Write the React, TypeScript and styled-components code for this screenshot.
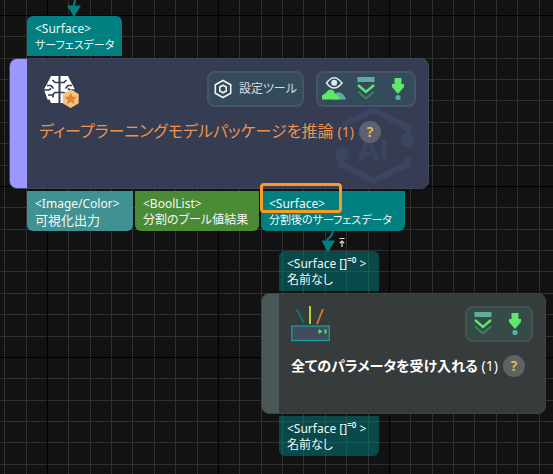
import React from "react";
import styled, { createGlobalStyle } from "styled-components";

const GlobalStyle = createGlobalStyle`
  *, *::before, *::after { box-sizing: border-box; }
  body {
    margin: 0;
    background: #121212;
    font-family: "Noto Sans", "Noto Sans CJK JP", sans-serif;
    font-feature-settings: "palt";
  }
`;

const Canvas = styled.main`
  position: relative;
  min-height: 100vh;
  overflow: hidden;
  background: #121212;
`;

const GridLayer = styled.svg`
  position: absolute;
  inset: 0;
  width: 100%;
  height: 100%;
`;

const WireLayer = styled.svg`
  position: absolute;
  left: 0;
  top: 0;
  overflow: visible;
`;

const NodeGroup = styled.section<{ $x: number; $y: number; $width: number }>`
  position: absolute;
  left: ${(p) => p.$x}px;
  top: ${(p) => p.$y}px;
  width: ${(p) => p.$width}px;
  display: flex;
  flex-direction: column;
  gap: 2px;
`;

const PortRow = styled.div`
  display: flex;
  gap: 2px;
  padding-left: 18px;
`;

const Port = styled.div<{ $color: string; $side: "in" | "out"; $width: number }>`
  min-width: ${(p) => p.$width}px;
  padding: 5px 8px 3px;
  border-radius: ${(p) => (p.$side === "in" ? "6px 6px 0 0" : "0 0 6px 6px")};
  background: ${(p) => p.$color};
  color: #f4f8f8;
  line-height: 16px;
  white-space: nowrap;
`;

const PortType = styled.div`
  height: 16px;
  font-size: 12px;
`;

const PortName = styled.div<{ $size: number }>`
  height: 16px;
  font-size: ${(p) => p.$size}px;
`;

const Sup = styled.sup`
  font-size: 8px;
  line-height: 8px;
  font-weight: 600;
`;

const NodeBox = styled.article<{ $fill: string; $stripe: string; $edge: string }>`
  position: relative;
  display: flex;
  overflow: hidden;
  border: 1px solid ${(p) => p.$edge};
  border-radius: 8px;
  background: ${(p) => p.$fill};
  &::before {
    content: "";
    flex: none;
    width: 17px;
    background: ${(p) => p.$stripe};
  }
`;

const NodeContent = styled.div<{ $bottom: number }>`
  position: relative;
  flex: 1;
  min-width: 0;
  padding: 12px 12px ${(p) => p.$bottom}px;
`;

const NodeHeader = styled.header`
  display: flex;
  align-items: flex-start;
  gap: 12px;
  height: 36px;
  & > svg { margin-right: auto; }
`;

const ToolButton = styled.button<{ $tint: string }>`
  display: flex;
  align-items: center;
  gap: 7px;
  height: 36px;
  padding: 0 5px;
  border: 2px solid #465565;
  border-radius: 8px;
  background: ${(p) => p.$tint};
  color: #d5dde2;
  font: inherit;
  font-size: 12px;
  line-height: 18px;
  white-space: nowrap;
`;

const ToolGroup = styled.div<{ $tint: string; $edge: string }>`
  display: flex;
  align-items: center;
  gap: 8px;
  height: 36px;
  padding: 0 4px;
  border: 2px solid ${(p) => p.$edge};
  border-radius: 8px;
  background: ${(p) => p.$tint};
`;

const IconButton = styled.button`
  display: flex;
  padding: 0;
  border: 0;
  background: none;
`;

const TitleRow = styled.div`
  position: relative;
  display: flex;
  align-items: center;
  gap: 5px;
  margin-top: 13px;
`;

const Title = styled.h2<{ $color: string; $size: number; $weight: number }>`
  margin: 0;
  color: ${(p) => p.$color};
  font-size: ${(p) => p.$size}px;
  line-height: 22px;
  font-weight: ${(p) => p.$weight};
  white-space: nowrap;
`;

const Count = styled.span`
  font-size: 14px;
  font-weight: 400;
`;

const HelpButton = styled.button<{ $fill: string }>`
  flex: none;
  width: 22px;
  height: 22px;
  padding: 0;
  border: 0;
  border-radius: 50%;
  background: ${(p) => p.$fill};
  color: #ecc04f;
  font: inherit;
  font-size: 14px;
  line-height: 22px;
  font-weight: 600;
`;

const Watermark = styled.svg`
  position: absolute;
  right: 13px;
  bottom: 3px;
`;

const Highlight = styled.div`
  position: absolute;
  left: 260px;
  top: 183px;
  width: 82px;
  height: 30px;
  border: 3px solid #ff9a1f;
  border-radius: 4px;
`;

const minor = [21, 43, 64, 85, 107, 128, 150];

function Grid() {
  return (
    <GridLayer aria-hidden="true">
      <defs>
        <pattern id="grid" x="47" y="15" width="171" height="171" patternUnits="userSpaceOnUse">
          {minor.map((n) => (
            <g key={n} fill="#303030">
              <rect x={n} y="0" width="1" height="171" />
              <rect x="0" y={n} width="171" height="1" />
            </g>
          ))}
          <rect width="1" height="171" fill="#000" />
          <rect width="171" height="1" fill="#000" />
        </pattern>
      </defs>
      <rect width="100%" height="100%" fill="url(#grid)" />
    </GridLayer>
  );
}

function Wires() {
  return (
    <WireLayer width="1" height="1" aria-hidden="true">
      <g fill="none" stroke="#008080" strokeWidth="2">
        <path d="M75 0 Q75 3 73 7" />
        <path d="M333 231 Q332 236 329 238 T328 243" />
      </g>
      <path d="M67 5.500h14L74 17z" fill="#008080" />
      <path d="M321.500 240.500h13.500L328 252.500z" fill="#008080" />
      <path d="M339.500 238.500h5M342 247v-6M339.800 243.200L342 241l2.200 2.200" fill="none" stroke="#e8e0cc" strokeWidth="1.200" />
    </WireLayer>
  );
}

function BrainIcon() {
  return (
    <svg width="42" height="38" viewBox="0 0 42 38" aria-hidden="true">
      <path d="M12 5h7.500v27H12l-1.500-3.500H8.500L5.500 20v-2.500L9 11z" fill="#fff" />
      <path d="M21.500 5H29l3 6 3.500 6.500V20l-3 8.500h-2L29 32h-7.500z" fill="#fff" />
      <g fill="none" stroke="#363d52" strokeWidth="1.700">
        <path d="M20 11.500h-4l-2.500-2.500M8 14.500h4l2.500 3M4 19h6l2-1.500M20 21.500h-4l-2 2v3M9 24h5" />
        <path d="M21 11.500h4l2.500-2.500M33 14.500h-4l-2.500 3M37 19h-6l-2-1.500M21 21.500h4l2 2v3" />
      </g>
      <path d="M31.700 18.500l8 4.600v9.200l-8 4.600-8-4.600v-9.200z" fill="#f8c380" />
      <path d="M31.700 21.800l1.800 3.800 4.100.5-3 2.900.8 4.100-3.700-2-3.700 2 .8-4.100-3-2.900 4.100-.5z" fill="#e5832e" />
    </svg>
  );
}

function LidarIcon() {
  return (
    <svg width="40" height="36" viewBox="0 0 40 36" aria-hidden="true">
      <path d="M5.500 3L13 17" stroke="#0b7777" strokeWidth="1.700" />
      <path d="M19 0v18" stroke="#c4e52a" strokeWidth="1.800" />
      <path d="M32 3l-6 15" stroke="#e07b25" strokeWidth="1.800" />
      <rect x=".8" y="20" width="37.500" height="14.500" fill="#434c5b" stroke="#139a9e" strokeWidth="1.400" />
      <path d="M27.500 23l4 2.500-4 2.500zM33.500 23.500h2v4h-2z" fill="#5fe06c" />
    </svg>
  );
}

function NutIcon() {
  return (
    <svg width="18" height="20" viewBox="0 0 18 20" fill="none" stroke="#f0f3f5" strokeWidth="1.600" aria-hidden="true">
      <path d="M9 1.500l7.700 4.300v8.400L9 18.500l-7.700-4.300V5.800z" />
      <path d="M9 6.200l3.200 1.800v4L9 13.800 5.800 12V8z" />
    </svg>
  );
}

function EyeIcon() {
  return (
    <svg width="24" height="26" viewBox="0 0 24 26" aria-hidden="true">
      <path d="M13 18q3-3 6-1 3 1 5 6.500H10z" fill="#5fae9b" />
      <path d="M0 23.500v-4q2-2 4-2.500 2-4 5-3.500t4 4q3 1 5 6z" fill="#60e66c" />
      <path d="M4.500 7Q12-3.500 20 7q-8 10-15.500 0z" fill="none" stroke="#dce8f2" strokeWidth="1.600" />
      <circle cx="12.200" cy="6.800" r="3" fill="#dce8f2" />
    </svg>
  );
}

function ChevronsIcon() {
  return (
    <svg width="24" height="26" viewBox="0 0 24 26" aria-hidden="true">
      <rect x="3.500" y="1" width="17" height="5" fill="#5fae9b" />
      <path d="M4 15.500l8 7 8-7" fill="none" stroke="#428059" strokeWidth="2" />
      <path d="M4 9l8 7 8-7" fill="none" stroke="#60e66c" strokeWidth="2.400" />
    </svg>
  );
}

function RunIcon() {
  return (
    <svg width="24" height="26" viewBox="0 0 24 26" aria-hidden="true">
      <path d="M8.500 2h7v6H18v3L12 18l-6-7V8h2.500z" fill="#60e66c" />
      <circle cx="12" cy="21.500" r="2.600" fill="#5fae9b" />
    </svg>
  );
}

function AiWatermark() {
  return (
    <Watermark width="80" height="80" viewBox="335 104 80 80" aria-hidden="true">
      <g fill="none" stroke="#3b4562" strokeWidth="6">
        <path d="M343 124l31-15 34 18v12" />
        <path d="M341 153v10l33 17 34-17v-6" />
      </g>
      <circle cx="407" cy="139" r="7" fill="#3b4562" />
      <circle cx="342" cy="153" r="7" fill="#3b4562" />
      <text x="373" y="160" textAnchor="middle" fontFamily="Liberation Sans, sans-serif" fontWeight="700" fontSize="32" fill="#3b4562">
        AI
      </text>
    </Watermark>
  );
}

function ArrayPort({ side }: { side: "in" | "out" }) {
  return (
    <PortRow>
      <Port $color="rgba(0, 128, 128, 0.5)" $side={side} $width={100}>
        <PortType>&lt;Surface []<Sup>=0</Sup> &gt;</PortType>
        <PortName $size={12}>名前なし</PortName>
      </Port>
    </PortRow>
  );
}

export default function App() {
  return (
    <>
      <GlobalStyle />
      <Canvas>
        <Grid />
        <Wires />

        <NodeGroup $x={9} $y={16} $width={420}>
          <PortRow>
            <Port $color="#008080" $side="in" $width={94}>
              <PortType>&lt;Surface&gt;</PortType>
              <PortName $size={11}>サーフェスデータ</PortName>
            </Port>
          </PortRow>
          <NodeBox $fill="#363d52" $stripe="#9b99ff" $edge="#3f4660">
            <NodeContent $bottom={45}>
              <AiWatermark />
              <NodeHeader>
                <BrainIcon />
                <ToolButton type="button" $tint="#344b5c">
                  <NutIcon />
                  設定ツール
                </ToolButton>
                <ToolGroup $tint="#344b5c" $edge="#465565">
                  <IconButton type="button" aria-label="表示"><EyeIcon /></IconButton>
                  <IconButton type="button" aria-label="続けて実行"><ChevronsIcon /></IconButton>
                  <IconButton type="button" aria-label="実行"><RunIcon /></IconButton>
                </ToolGroup>
              </NodeHeader>
              <TitleRow>
                <Title $color="#ee934c" $size={16} $weight={400}>
                  ディープラーニングモデルパッケージを推論 <Count>(1)</Count>
                </Title>
                <HelpButton type="button" aria-label="ヘルプ" $fill="#5d6271">?</HelpButton>
              </TitleRow>
            </NodeContent>
          </NodeBox>
          <PortRow>
            <Port $color="#409292" $side="out" $width={106}>
              <PortType>&lt;Image/Color&gt;</PortType>
              <PortName $size={13}>可視化出力</PortName>
            </Port>
            <Port $color="#4b8b35" $side="out" $width={124}>
              <PortType>&lt;BoolList&gt;</PortType>
              <PortName $size={12}>分割のブール値結果</PortName>
            </Port>
            <Port $color="#008080" $side="out" $width={144}>
              <PortType>&lt;Surface&gt;</PortType>
              <PortName $size={11}>分割後のサーフェスデータ</PortName>
            </Port>
          </PortRow>
        </NodeGroup>

        <NodeGroup $x={261} $y={251} $width={285}>
          <ArrayPort side="in" />
          <NodeBox $fill="#363b3b" $stripe="#4a5958" $edge="#3f4544">
            <NodeContent $bottom={36}>
              <NodeHeader>
                <LidarIcon />
                <ToolGroup $tint="#344b47" $edge="#465350">
                  <IconButton type="button" aria-label="続けて実行"><ChevronsIcon /></IconButton>
                  <IconButton type="button" aria-label="実行"><RunIcon /></IconButton>
                </ToolGroup>
              </NodeHeader>
              <TitleRow>
                <Title $color="#ffffff" $size={14} $weight={600}>
                  全てのパラメータを受け入れる <Count>(1)</Count>
                </Title>
                <HelpButton type="button" aria-label="ヘルプ" $fill="#5f6262">?</HelpButton>
              </TitleRow>
            </NodeContent>
          </NodeBox>
          <ArrayPort side="out" />
        </NodeGroup>

        <Highlight />
      </Canvas>
    </>
  );
}
